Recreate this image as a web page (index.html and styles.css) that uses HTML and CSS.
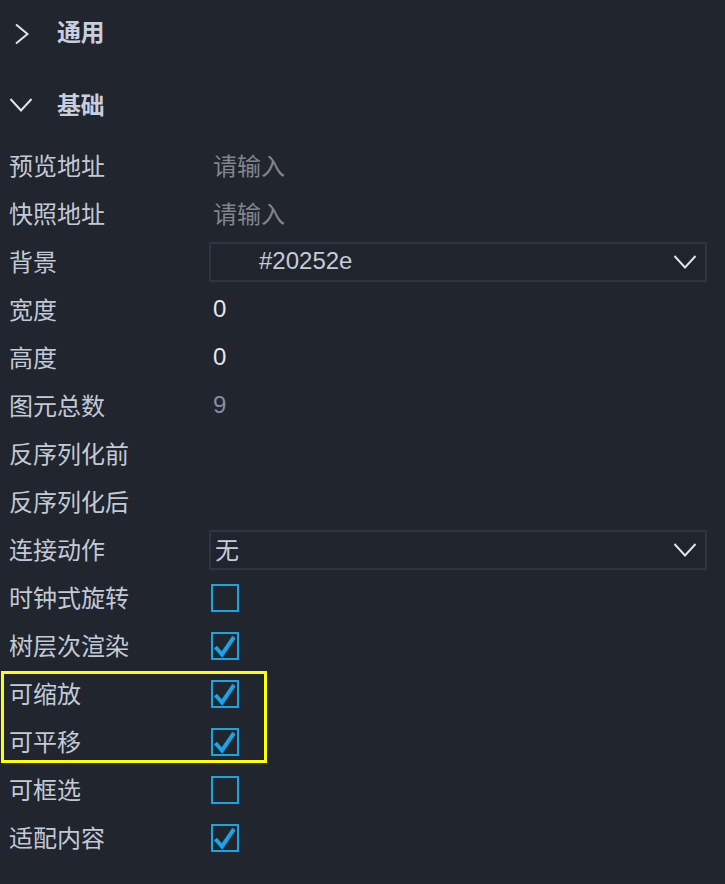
FILE: index.html
```html
<!DOCTYPE html>
<html lang="zh">
<head>
<meta charset="utf-8">
<title>属性面板</title>
<link rel="stylesheet" href="styles.css">
</head>
<body>
<div class="panel">
  <div class="section-head first">
    <span class="chev">
      <svg width="16" height="22" viewBox="0 0 16 22"><path d="M2 1.5 L13.5 11 L2 20.5" fill="none" stroke="#e2e4e8" stroke-width="2"/></svg>
    </span>
    <span class="head-title">通用</span>
  </div>
  <div class="section-head second">
    <span class="chev">
      <svg width="24" height="16" viewBox="0 0 24 16"><path d="M1.5 2 L12 13.5 L22.5 2" fill="none" stroke="#e2e4e8" stroke-width="2"/></svg>
    </span>
    <span class="head-title">基础</span>
  </div>

  <div class="rows">
    <div class="row"><span class="label">预览地址</span><span class="value placeholder">请输入</span></div>
    <div class="row"><span class="label">快照地址</span><span class="value placeholder">请输入</span></div>
    <div class="row"><span class="label">背景</span>
      <div class="select"><span class="swatch"></span><span class="select-text">#20252e</span>
        <svg class="select-arrow" width="24" height="16" viewBox="0 0 24 16"><path d="M1.5 2 L12 13.5 L22.5 2" fill="none" stroke="#dfe2e8" stroke-width="2"/></svg>
      </div>
    </div>
    <div class="row"><span class="label">宽度</span><span class="value num">0</span></div>
    <div class="row"><span class="label">高度</span><span class="value num">0</span></div>
    <div class="row"><span class="label">图元总数</span><span class="value num dim">9</span></div>
    <div class="row"><span class="label">反序列化前</span></div>
    <div class="row"><span class="label">反序列化后</span></div>
    <div class="row"><span class="label">连接动作</span>
      <div class="select"><span class="select-text plain">无</span>
        <svg class="select-arrow" width="24" height="16" viewBox="0 0 24 16"><path d="M1.5 2 L12 13.5 L22.5 2" fill="none" stroke="#dfe2e8" stroke-width="2"/></svg>
      </div>
    </div>
    <div class="row"><span class="label">时钟式旋转</span><span class="check"></span></div>
    <div class="row"><span class="label">树层次渲染</span><span class="check on"><svg width="24" height="24" viewBox="0 0 24 24"><path d="M2.5 13 L9 20.5 L21 3" fill="none" stroke="#18a5e6" stroke-width="4"/></svg></span></div>
    <div class="highlight">
      <div class="row"><span class="label">可缩放</span><span class="check on"><svg width="24" height="24" viewBox="0 0 24 24"><path d="M2.5 13 L9 20.5 L21 3" fill="none" stroke="#18a5e6" stroke-width="4"/></svg></span></div>
      <div class="row"><span class="label">可平移</span><span class="check on"><svg width="24" height="24" viewBox="0 0 24 24"><path d="M2.5 13 L9 20.5 L21 3" fill="none" stroke="#18a5e6" stroke-width="4"/></svg></span></div>
    </div>
    <div class="row"><span class="label">可框选</span><span class="check"></span></div>
    <div class="row"><span class="label">适配内容</span><span class="check on"><svg width="24" height="24" viewBox="0 0 24 24"><path d="M2.5 13 L9 20.5 L21 3" fill="none" stroke="#18a5e6" stroke-width="4"/></svg></span></div>
  </div>
</div>
</body>
</html>
```

FILE: styles.css
```css
html, body {
  margin: 0;
  padding: 0;
  background: #20252e;
}
body {
  width: 725px;
  height: 884px;
  overflow: hidden;
  font-family: "Liberation Sans", "Noto Sans CJK SC", sans-serif;
  font-size: 24px;
  color: #c3c9d6;
}
.panel {
  display: flex;
  flex-direction: column;
}
.section-head {
  display: flex;
  align-items: center;
  height: 60px;
}
.section-head.first .chev {
  padding-top: 8px;
}
.section-head.second {
  height: 70px;
  margin-top: 8px;
  margin-bottom: 4px;
}
.second .chev {
  padding-top: 4px;
}
.chev {
  width: 57px;
  display: flex;
  align-items: center;
}
.first .chev {
  padding-left: 14px;
  width: 43px;
}
.second .chev {
  padding-left: 9px;
  width: 48px;
}
.chev svg { display: block; }
.head-title {
  font-family: "Noto Sans CJK SC", sans-serif;
  font-weight: 700;
  color: #c7cfdf;
  letter-spacing: -0.5px;
}
.rows {
  display: flex;
  flex-direction: column;
}
.row {
  display: flex;
  align-items: center;
  height: 48px;
}
.label {
  width: 200px;
  padding-left: 9px;
  padding-bottom: 3px;
  font-family: "Noto Sans CJK SC", sans-serif;
  color: #c3c9d6;
  line-height: 1;
}
.value {
  padding-left: 4px;
  padding-bottom: 3px;
  line-height: 1;
}
.placeholder {
  font-family: "Noto Sans CJK SC", sans-serif;
  color: #80858d;
}
.num {
  color: #e6e8ec;
}
.num.dim {
  color: #878e99;
}
.select {
  width: 494px;
  height: 36px;
  border: 2px solid #2e3442;
  background: #1f242d;
  display: flex;
  align-items: center;
}
.swatch {
  width: 44px;
  height: 24px;
  margin-left: 4px;
  background: #20252e;
}
.select-text {
  color: #c5ccd9;
  line-height: 1;
  padding-bottom: 2px;
}
.select-text.plain {
  font-family: "Noto Sans CJK SC", sans-serif;
  margin-left: 4px;
}
.select-arrow {
  margin-left: auto;
  margin-right: 8px;
  display: block;
}
.check {
  width: 24px;
  height: 24px;
  margin-left: 2px;
  border: 2px solid #18a5e6;
  display: block;
}
.check svg { display: block; }
.highlight {
  position: relative;
  display: flex;
  flex-direction: column;
}
.highlight::after {
  content: "";
  position: absolute;
  left: 1px;
  top: 1px;
  width: 260px;
  height: 86px;
  border: 3px solid #ffff00;
  pointer-events: none;
}
```
